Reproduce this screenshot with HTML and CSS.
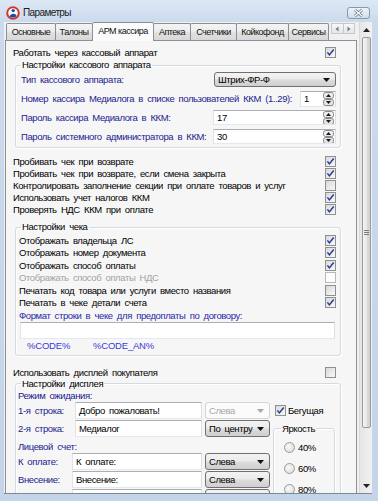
FILE: index.html
```html
<!DOCTYPE html>
<html lang="ru">
<head>
<meta charset="utf-8">
<title>Параметры</title>
<link rel="stylesheet" href="styles.css">
</head>
<body>
<div class="window">
  <div class="titlebar">
    <svg class="appicon" width="14" height="14" viewBox="0 0 14 14">
      <circle cx="7" cy="7" r="5.8" fill="#fff" stroke="#d8352b" stroke-width="2"/>
      <circle cx="7.2" cy="4.6" r="1.7" fill="#1d4ea6"/>
      <path d="M3.6 10.6 C4.4 7.2 9.8 6.8 10.6 10.2 C9 11.8 5.2 12 3.6 10.6Z" fill="#1d4ea6"/>
    </svg>
    <span class="title">Параметры</span>
    <span class="closebtn"><svg width="11" height="8" viewBox="0 0 11 8"><path d="M2 1 L9 7 M9 1 L2 7" stroke="#6a7686" stroke-width="2.8"/><path d="M2 1 L9 7 M9 1 L2 7" stroke="#fff" stroke-width="1.2"/></svg></span>
  </div>
  <div class="client">
    <div class="main">
      <div class="tabs">
        <span class="tab t1">Основные</span>
        <span class="tab t2">Талоны</span>
        <span class="tab sel t3">АРМ кассира</span>
        <span class="tab t4">Аптека</span>
        <span class="tab t5">Счетчики</span>
        <span class="tab t6">Койкофонд</span>
        <span class="tab t7">Сервисы</span>
        <span class="tabnav">
          <span class="navbtn"><svg width="4" height="6" viewBox="0 0 4 6"><path d="M3.5 0.5 0.5 3 3.5 5.5Z" fill="#6d7c94"/></svg></span>
          <span class="navbtn"><svg width="4" height="6" viewBox="0 0 4 6"><path d="M0.5 0.5 3.5 3 0.5 5.5Z" fill="#6d7c94"/></svg></span>
        </span>
      </div>
      <div class="panel">
        <div class="row top"><span>Работать через кассовый аппарат</span><span class="cb"><svg width="9" height="9" viewBox="0 0 9 9"><path d="M1.4 4.4 3.4 6.9 7.7 1.5" fill="none" stroke="#283a92" stroke-width="1.5"/></svg></span></div>

        <fieldset class="grp g1">
          <legend>Настройки кассового аппарата</legend>
          <div class="frow first"><span class="nlbl">Тип кассового аппарата:</span><span class="combo w-type"><span>Штрих-ФР-Ф</span><svg class="arr" width="7" height="4" viewBox="0 0 7 4"><path d="M0 0H7L3.5 4Z" fill="#111"/></svg></span></div>
          <div class="frow"><span class="nlbl">Номер кассира Медиалога в списке пользователей ККМ (1..29):</span><span class="spin w-s1"><span class="val">1</span><svg width="11" height="14" viewBox="0 0 11 14"><rect x="0.5" y="0.5" width="10" height="6" rx="2" fill="#ececec" stroke="#8a8a8a"/><rect x="0.5" y="7.5" width="10" height="6" rx="2" fill="#e2e2e2" stroke="#8a8a8a"/><path d="M3 5 5.5 2 8 5Z M3 9 5.5 12 8 9Z" fill="#1a1a1a"/></svg></span></div>
          <div class="frow"><span class="nlbl">Пароль кассира Медиалога в ККМ:</span><span class="spin w-s2"><span class="val">17</span><svg width="11" height="14" viewBox="0 0 11 14"><rect x="0.5" y="0.5" width="10" height="6" rx="2" fill="#ececec" stroke="#8a8a8a"/><rect x="0.5" y="7.5" width="10" height="6" rx="2" fill="#e2e2e2" stroke="#8a8a8a"/><path d="M3 5 5.5 2 8 5Z M3 9 5.5 12 8 9Z" fill="#1a1a1a"/></svg></span></div>
          <div class="frow"><span class="nlbl">Пароль системного администратора в ККМ:</span><span class="spin w-s2"><span class="val">30</span><svg width="11" height="14" viewBox="0 0 11 14"><rect x="0.5" y="0.5" width="10" height="6" rx="2" fill="#ececec" stroke="#8a8a8a"/><rect x="0.5" y="7.5" width="10" height="6" rx="2" fill="#e2e2e2" stroke="#8a8a8a"/><path d="M3 5 5.5 2 8 5Z M3 9 5.5 12 8 9Z" fill="#1a1a1a"/></svg></span></div>
        </fieldset>

        <div class="checks">
          <div class="row top"><span>Пробивать чек при возврате</span><span class="cb"><svg width="9" height="9" viewBox="0 0 9 9"><path d="M1.4 4.4 3.4 6.9 7.7 1.5" fill="none" stroke="#283a92" stroke-width="1.5"/></svg></span></div>
          <div class="row top"><span>Пробивать чек при возврате, если смена закрыта</span><span class="cb"><svg width="9" height="9" viewBox="0 0 9 9"><path d="M1.4 4.4 3.4 6.9 7.7 1.5" fill="none" stroke="#283a92" stroke-width="1.5"/></svg></span></div>
          <div class="row top"><span>Контролировать заполнение секции при оплате товаров и услуг</span><span class="cb"></span></div>
          <div class="row top"><span>Использовать учет налогов ККМ</span><span class="cb"><svg width="9" height="9" viewBox="0 0 9 9"><path d="M1.4 4.4 3.4 6.9 7.7 1.5" fill="none" stroke="#283a92" stroke-width="1.5"/></svg></span></div>
          <div class="row top"><span>Проверять НДС ККМ при оплате</span><span class="cb"><svg width="9" height="9" viewBox="0 0 9 9"><path d="M1.4 4.4 3.4 6.9 7.7 1.5" fill="none" stroke="#283a92" stroke-width="1.5"/></svg></span></div>
        </div>

        <fieldset class="grp g2">
          <legend>Настройки чека</legend>
          <div class="row r2 first"><span>Отображать владельца ЛС</span><span class="cb"><svg width="9" height="9" viewBox="0 0 9 9"><path d="M1.4 4.4 3.4 6.9 7.7 1.5" fill="none" stroke="#283a92" stroke-width="1.5"/></svg></span></div>
          <div class="row r2"><span>Отображать номер документа</span><span class="cb"><svg width="9" height="9" viewBox="0 0 9 9"><path d="M1.4 4.4 3.4 6.9 7.7 1.5" fill="none" stroke="#283a92" stroke-width="1.5"/></svg></span></div>
          <div class="row r2"><span>Отображать способ оплаты</span><span class="cb"><svg width="9" height="9" viewBox="0 0 9 9"><path d="M1.4 4.4 3.4 6.9 7.7 1.5" fill="none" stroke="#283a92" stroke-width="1.5"/></svg></span></div>
          <div class="row r2 dis"><span>Отображать способ оплаты НДС</span><span class="cb off"></span></div>
          <div class="row r2"><span>Печатать код товара или услуги вместо названия</span><span class="cb"></span></div>
          <div class="row r2"><span>Печатать в чеке детали счета</span><span class="cb"><svg width="9" height="9" viewBox="0 0 9 9"><path d="M1.4 4.4 3.4 6.9 7.7 1.5" fill="none" stroke="#283a92" stroke-width="1.5"/></svg></span></div>
          <div class="row r2"><span class="nlbl fmt">Формат строки в чеке для предоплаты по договору:</span></div>
          <div class="tin fin"></div>
          <div class="codes"><span class="code1">%CODE%</span><span>%CODE_AN%</span></div>
        </fieldset>

        <div class="row top disp-on"><span>Использовать дисплей покупателя</span><span class="cb"></span></div>

        <fieldset class="grp g3">
          <legend>Настройки дисплея</legend>
          <div class="row"><span class="nlbl">Режим ожидания:</span></div>
          <div class="disp">
            <div class="dleft">
              <div class="drow"><span class="dl nlbl">1-я строка:</span><span class="tin w-a">Добро пожаловать!</span><span class="combo cdis"><span>Слева</span><svg class="arr" width="7" height="4" viewBox="0 0 7 4"><path d="M0 0H7L3.5 4Z" fill="#a8a8a8"/></svg></span></div>
              <div class="drow"><span class="dl nlbl">2-я строка:</span><span class="tin w-a">Медиалог</span><span class="combo csm"><span>По центру</span><svg class="arr" width="7" height="4" viewBox="0 0 7 4"><path d="M0 0H7L3.5 4Z" fill="#111"/></svg></span></div>
              <div class="row lic"><span class="nlbl">Лицевой счет:</span></div>
              <div class="drow"><span class="dl short nlbl">К оплате:</span><span class="tin w-b">К оплате:</span><span class="combo csm"><span>Слева</span><svg class="arr" width="7" height="4" viewBox="0 0 7 4"><path d="M0 0H7L3.5 4Z" fill="#111"/></svg></span></div>
              <div class="drow"><span class="dl short nlbl">Внесение:</span><span class="tin w-b">Внесение:</span><span class="combo csm"><span>Слева</span><svg class="arr" width="7" height="4" viewBox="0 0 7 4"><path d="M0 0H7L3.5 4Z" fill="#111"/></svg></span></div>
              <div class="drow"><span class="dl short nlbl"></span><span class="tin w-b"></span><span class="combo csm"><span></span></span></div>
            </div>
            <div class="dright">
              <div class="runrow"><span class="cb"><svg width="9" height="9" viewBox="0 0 9 9"><path d="M1.4 4.4 3.4 6.9 7.7 1.5" fill="none" stroke="#283a92" stroke-width="1.5"/></svg></span><span>Бегущая</span></div>
              <fieldset class="grp g4">
                <legend>Яркость</legend>
                <div class="rrow"><span class="rad"></span><span>40%</span></div>
                <div class="rrow"><span class="rad"></span><span>60%</span></div>
                <div class="rrow"><span class="rad"></span><span>80%</span></div>
              </fieldset>
            </div>
          </div>
        </fieldset>
      </div>
    </div>
    <div class="vscroll">
      <div class="sbtn"><svg width="7" height="4" viewBox="0 0 7 4"><path d="M0 4H7L3.5 0Z" fill="#222"/></svg></div>
      <div class="thumb"><svg width="5" height="5" viewBox="0 0 5 5"><path d="M0 0.5H5M0 2.5H5M0 4.5H5" stroke="#7a7a7a"/></svg></div>
      <div class="sfill"></div>
      <div class="sbtn"><svg width="7" height="4" viewBox="0 0 7 4"><path d="M0 0H7L3.5 4Z" fill="#222"/></svg></div>
    </div>
  </div>
</div>
</body>
</html>
```
FILE: styles.css
```css
* { box-sizing: border-box; }

body {
  margin: 0;
  font-family: "Liberation Sans", Arial, sans-serif;
  font-size: 9.5px;
  letter-spacing: -0.4px;
  word-spacing: 2px;
  color: #000;
  background: #fff;
}

.window {
  width: 378px;
  height: 501px;
  display: flex;
  flex-direction: column;
  overflow: hidden;
  background: linear-gradient(#dde8f5, #cbdaec 22px, #c4d5e9);
}

.titlebar {
  height: 22px;
  flex: none;
  display: flex;
  align-items: center;
  padding: 3px 0 0 6px;
}

.appicon { flex: none; }

.title {
  margin-left: 3px;
  font-size: 10px;
  letter-spacing: -0.6px;
  word-spacing: 0;
  color: #1b1b1b;
}

.closebtn {
  margin-left: auto;
  margin-right: 8px;
  width: 23px;
  height: 12px;
  border: 1px solid #8797ae;
  border-radius: 3px;
  background: linear-gradient(#eef3f9, #d3ddea);
  display: flex;
  align-items: center;
  justify-content: center;
}

.client {
  flex: 1;
  min-height: 0;
  display: flex;
  margin: 0 6px 7px 4px;
  background: #f0f0f0;
  border-bottom: 1px solid #7d8896;
  overflow: hidden;
}

.main {
  flex: 1;
  min-width: 0;
  display: flex;
  flex-direction: column;
  padding-left: 1px;
}

.tabs {
  height: 18px;
  flex: none;
  display: flex;
  align-items: flex-end;
  padding-left: 1px;
  position: relative;
  z-index: 1;
}

.tab {
  height: 17px;
  margin-left: -1px;
  border: 1px solid #8c9096;
  border-bottom: none;
  border-radius: 2px 2px 0 0;
  background: linear-gradient(#f4f4f4, #ececec 45%, #e0e0e0 55%, #d8d8d8);
  display: flex;
  align-items: center;
  justify-content: center;
  font-size: 9px;
  letter-spacing: -0.5px;
  word-spacing: 0;
  white-space: nowrap;
  color: #111;
}
.t1 { width: 50px; margin-left: 0; }
.t2 { width: 38px; }
.t3 { width: 62px; }
.t4 { width: 38px; }
.t5 { width: 47px; }
.t6 { width: 53px; }
.t7 { width: 41px; }

.tab.sel {
  height: 19px;
  margin-bottom: -1px;
  background: #fbfbfb;
  position: relative;
  z-index: 2;
  padding-bottom: 2px;
}

.tabnav {
  align-self: flex-start;
  margin: 1px 0 0 2px;
  width: 24px;
  height: 11px;
  display: flex;
}
.navbtn {
  flex: 1;
  border: 1px solid #c3c9d2;
  background: linear-gradient(#f7f7f7, #e6e6e6);
  display: flex;
  align-items: center;
  justify-content: center;
}
.navbtn + .navbtn { margin-left: -1px; }

.panel {
  flex: 1;
  min-height: 0;
  overflow: hidden;
  border: 1px solid #8c9096;
  border-bottom: none;
  background: #f6f6f6;
  padding: 5px 15px 0 7px;
}

.row {
  display: flex;
  align-items: center;
  justify-content: space-between;
  height: 12px;
  white-space: nowrap;
}
.row.top { padding-right: 5px; }

.cb {
  flex: none;
  width: 11px;
  height: 11px;
  border: 1px solid #8e8f91;
  background: linear-gradient(135deg, #d9d9d9, #f8f8f8);
  display: flex;
  align-items: center;
  justify-content: center;
}
.cb.off {
  background: #fdfdfd;
  border-color: #b9b9b9;
}

.nlbl { color: #22228e; }

.grp {
  margin: 1px 0 0 2px;
  min-width: 0;
  border: 1px solid #d3dbe2;
  border-radius: 3px;
  box-shadow: inset 1px 1px 0 #fff, 1px 1px 0 #fff;
}
.grp legend {
  padding: 0 1px;
  height: 12px;
  line-height: 12px;
}

.g1 { padding: 0 4px 1px 5px; }
.frow {
  display: flex;
  align-items: center;
  justify-content: space-between;
  height: 19px;
  white-space: nowrap;
}
.frow.first { margin-top: -1px; }

.combo {
  flex: none;
  height: 15px;
  border: 1px solid #707070;
  border-radius: 3px;
  background: linear-gradient(#f3f3f3, #ebebeb 48%, #dcdcdc 52%, #cfcfcf);
  display: flex;
  align-items: center;
  justify-content: space-between;
  padding: 0 5px 0 3px;
  color: #000;
}
.w-type { width: 122px; }

.tin, .spin {
  flex: none;
  background: #fff;
  border: 1px solid;
  border-color: #abadb3 #dbdfe6 #e3e9ef #e2e3ea;
  display: flex;
  align-items: center;
  padding-left: 3px;
  white-space: nowrap;
  overflow: hidden;
}
.spin { height: 16px; padding-right: 1px; }
.spin .val { flex: 1; }
.w-s1 { width: 36px; }
.w-s2 { width: 123px; height: 15px; }

.checks { margin-top: 7px; }

.g2 {
  margin-top: 6px;
  padding: 0 4px 3px 3px;
}
.g2 legend { margin-left: 2px; }
.r2 { height: 12.5px; }
.r2.first { margin-top: 1px; }
.dis { color: #a3a3a3; }
.fmt { color: #2828a8; }
.fin {
  height: 17px;
  margin: 0 1px;
}
.codes {
  display: flex;
  height: 12px;
  margin-top: 1px;
  align-items: center;
  padding-left: 8px;
  color: #3a3ad8;
  letter-spacing: -0.2px;
}
.code1 { width: 66px; }

.disp-on { margin-top: 11px; }

.g3 {
  margin-top: -1px;
  padding: 0 4px 0 2px;
}
.g3 legend { margin-left: 3px; }

.disp { display: flex; }
.dleft { width: 252px; flex: none; }
.dright { width: 62px; margin-left: 3px; flex: none; }

.drow {
  display: flex;
  align-items: center;
  height: 18px;
  white-space: nowrap;
}
.dl { width: 57px; flex: none; }
.dl.short { width: 54px; }
.drow .tin { height: 17px; }
.w-a { width: 127px; }
.w-b { width: 130px; }
.drow .combo { width: 65px; height: 17px; margin-left: 3px; }
.combo.cdis {
  background: #fbfbfb;
  border-color: #d4d4d4;
  color: #a9a9a9;
}
.lic { margin-top: 3px; }

.runrow {
  height: 18px;
  display: flex;
  align-items: center;
  padding-left: 2px;
  gap: 2px;
}

.g4 {
  margin: 3px 0 0 0;
  padding: 0 2px 0 7px;
}
.g4 legend { margin-left: 0; }
.rrow {
  height: 21px;
  display: flex;
  align-items: center;
  gap: 3px;
  padding-left: 3px;
}
.rrow:first-of-type { margin-top: 2px; }
.rad {
  width: 11px;
  height: 11px;
  border-radius: 50%;
  border: 1px solid #9a9a9a;
  background: radial-gradient(circle at 40% 40%, #fafafa, #d6d6d6);
  flex: none;
}

.vscroll {
  width: 13px;
  flex: none;
  margin-left: 2px;
  display: flex;
  flex-direction: column;
  background: linear-gradient(90deg, #e6e6e6, #f1f1f1);
  border-left: 1px solid #d9d9d9;
}
.sbtn {
  height: 15px;
  flex: none;
  display: flex;
  align-items: center;
  justify-content: center;
}
.thumb {
  height: 391px;
  flex: none;
  margin: 0 1px 0 2px;
  border: 1px solid #9a9a9a;
  border-radius: 2px;
  background: linear-gradient(90deg, #f4f4f4, #e9e9e9 50%, #dadada 52%, #d2d2d2);
  display: flex;
  align-items: center;
  justify-content: center;
}
.sfill { flex: 1; }
```
